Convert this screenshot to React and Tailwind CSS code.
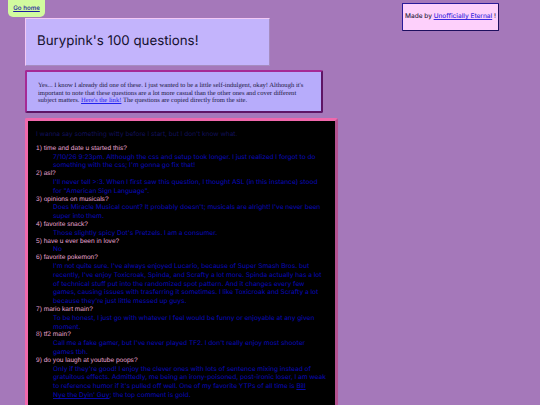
import React from "react";

const qa = [
  ["1) time and date u started this?", <>7/10/26 9:23pm. Although the css and setup took longer. I just realized I forgot to do something with the css; I'm gonna go fix that!</>],
  ["2) asl?", <>I'll never tell &gt;:3. When I first saw this question, I thought ASL (in this instance) stood for "American Sign Language".</>],
  ["3) opinions on musicals?", <>Does Miracle Musical count? It probably doesn't; musicals are alright! I've never been super into them.</>],
  ["4) favorite snack?", <>Those slightly spicy Dot's Pretzels. I am a consumer.</>],
  ["5) have u ever been in love?", <>No</>],
  ["6) favorite pokemon?", <>I'm not quite sure. I've always enjoyed Lucario, because of Super Smash Bros. but recently, I've enjoy Toxicroak, Spinda, and Scrafty a lot more. Spinda actually has a lot of technical stuff put into the randomized spot pattern. And it changes every few games, causing issues with trasferring it sometimes. I like Toxicroak and Scrafty a lot because they're just little messed up guys.</>],
  ["7) mario kart main?", <>To be honest, I just go with whatever I feel would be funny or enjoyable at any given moment.</>],
  ["8) tf2 main?", <>Call me a fake gamer, but I've never played TF2. I don't really enjoy most shooter games tbh.</>],
  ["9) do you laugh at youtube poops?", <>Only if they're good! I enjoy the clever ones with lots of sentence mixing instead of gratuitous effects. Admittedly, me being an irony-poisoned, post-ironic loser, I am weak to reference humor if it's pulled off well. One of my favorite YTPs of all time is <a href="#" className="underline">Bill<br />Nye the Dyin' Guy</a>; the top comment is gold.</>],
];

const App = () => {
  return (
    <div className="flex h-[405px] w-[540px] overflow-hidden bg-[#a578ba] items-start [text-rendering:geometricPrecision]">
      <div className="ml-[25px] w-[313px] shrink-0 flex flex-col items-start">
        <div className="-ml-[17px] h-[17px] w-[37px] rounded-b-[5px] bg-[#d2fb9f] flex items-center justify-center font-['Inter',sans-serif] font-medium text-[6.2px]">
          <a href="#" className="underline text-[#1c1ca0]">Go home</a>
        </div>
        <div className="mt-px h-[48px] w-[245px] border border-t-[#f3c8f5] border-l-[#f3c8f5] border-r-[#a58cc0] border-b-[#a58cc0] bg-[#c3b4fc] flex items-center pl-[11px]">
          <h1 className="font-['Inter',sans-serif] text-[13.3px] font-normal text-[#14102e]">Burypink's 100 questions!</h1>
        </div>
        <div className="mt-[4px] w-[298px] h-[43px] border-2 border-t-[#a52a95] border-l-[#a52a95] border-r-[#5e1565] border-b-[#5e1565] rounded-[2px] bg-[#b7acfb] pl-[11px] pr-[8px] pt-[10px] font-['Liberation_Serif',serif] text-[6.6px] leading-[7.7px] text-[#20183f]">
          Yes... I know I already did one of these. I just wanted to be a little self-indulgent, okay! Although it's important to note that these questions are a lot more casual than the other ones and cover different subject matters. <a href="#" className="underline text-[#2222ee]">Here's the link!</a> The questions are copied directly from the site.
        </div>
        <div className="mt-[5px] w-[313px] h-[400px] border-[3px] border-t-[#f068ac] border-l-[#f068ac] border-r-[#b3518f] border-b-[#b3518f] rounded-[2px] bg-black pl-[8px] pr-[8px] pt-[9px] font-['Inter',sans-serif] text-[6.55px] leading-[8.85px]">
          <p className="text-[#12105c]">I wanna say something witty before I start, but I don't know what.</p>
          <dl className="mt-[6px]">
            {qa.map(([q, a]) => (
              <div key={q}>
                <dt className="font-['Liberation_Sans',sans-serif] text-[6.6px] leading-[7.7px] text-[#e8a4cf]">{q}</dt>
                <dd className="ml-[17px] font-medium text-[#0808a8]">{a}</dd>
              </div>
            ))}
          </dl>
        </div>
      </div>
      <div className="ml-[64px] mt-[3px] w-[97px] h-[28px] border-[1.5px] border-t-[#2a1a9a] border-l-[#2a1a9a] border-r-[#1e0f5e] border-b-[#1e0f5e] rounded-[1px] bg-[#fdd0fb] flex items-center justify-center font-['Inter',sans-serif] font-medium text-[6.5px] whitespace-nowrap text-[#2a2040]">
        <span>Made by <a href="#" className="underline text-[#3a2ae0]">Unofficially Eternal</a> !</span>
      </div>
    </div>
  );
};

export default App;
